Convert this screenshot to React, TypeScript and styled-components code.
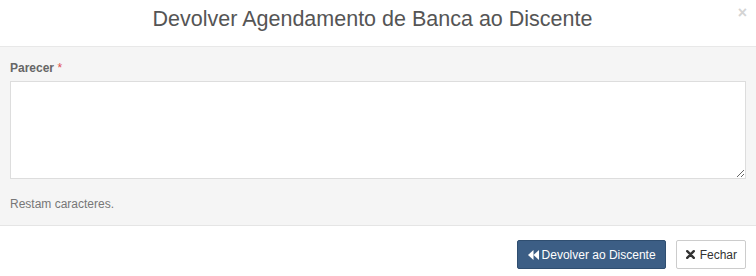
import React from 'react';
import styled, { createGlobalStyle } from 'styled-components';

const GlobalStyle = createGlobalStyle`
	html, body {
		margin: 0;
		padding: 0;
		background: #ffffff;
		font-family: "Liberation Sans", Arial, sans-serif;
	}
`;

function App() {
	return (
		<>
			<GlobalStyle />
			<Modal>
				<Header>
					<Title>Devolver Agendamento de Banca ao Discente</Title>
					<Close>×</Close>
				</Header>
				<Body>
					<Label>
						Parecer <Required>*</Required>
					</Label>
					<TextArea />
					<Counter>Restam caracteres.</Counter>
				</Body>
				<Footer>
					<BtnPrimary>
						<svg width="11" height="10" viewBox="0 0 11 10">
							<path d="M5.5 0 L0 5 L5.5 10 Z" fill="#fff" />
							<path d="M11 0 L5.5 5 L11 10 Z" fill="#fff" />
						</svg>
						Devolver ao Discente
					</BtnPrimary>
					<BtnDefault>
						<svg width="9" height="9" viewBox="0 0 9 9">
							<path d="M1.2 1.2 L7.8 7.8 M7.8 1.2 L1.2 7.8" stroke="#333" strokeWidth="2.4" strokeLinecap="round" />
						</svg>
						Fechar
					</BtnDefault>
				</Footer>
			</Modal>
		</>
	);
}

const Modal = styled.div`
	width: 756px;
	height: 276px;
	display: flex;
	flex-direction: column;
	background: #ffffff;
`;

const Header = styled.div`
	position: relative;
	height: 47px;
	box-sizing: border-box;
	display: flex;
	align-items: center;
	justify-content: center;
	border-bottom: 1px solid #e8e8e8;
	padding-bottom: 8px;
`;

const Title = styled.h4`
	margin: 0;
	font-size: 21.5px;
	font-weight: 400;
	color: #555555;
	margin-left: -11px;
`;

const Close = styled.span`
	position: absolute;
	right: 9px;
	top: 4px;
	font-size: 16px;
	color: #d4d4d4;
	font-weight: 700;
`;

const Body = styled.div`
	background: #f5f5f5;
	padding: 14px 10px 0 10px;
	height: 179px;
	box-sizing: border-box;
	border-bottom: 1px solid #e5e5e5;
`;

const Label = styled.div`
	font-size: 12px;
	font-weight: 700;
	color: #666666;
	line-height: 14px;
	margin-bottom: 6px;
`;

const Required = styled.span`
	color: #e05050;
	font-weight: 400;
`;

const TextArea = styled.textarea`
	display: block;
	width: 100%;
	height: 98px;
	box-sizing: border-box;
	border: 1px solid #dddddd;
	background: #ffffff;
	resize: vertical;
	margin: 0;
`;

const Counter = styled.div`
	margin-top: 18px;
	font-size: 12px;
	color: #777777;
`;

const Footer = styled.div`
	display: flex;
	justify-content: flex-end;
	gap: 10px;
	padding: 14px 10px 0 0;
`;

const BtnPrimary = styled.button`
	display: flex;
	align-items: center;
	gap: 3px;
	height: 29px;
	padding: 0 9px 0 10px;
	border: 1px solid #2f4e70;
	border-radius: 2px;
	background: #3c5e85;
	color: #ffffff;
	font-family: "Liberation Sans", Arial, sans-serif;
	font-size: 12px;
`;

const BtnDefault = styled(BtnPrimary)`
	gap: 5px;
	padding: 0 8px 0 9px;
	border: 1px solid #cccccc;
	background: #ffffff;
	color: #333333;
`;

export default App;
